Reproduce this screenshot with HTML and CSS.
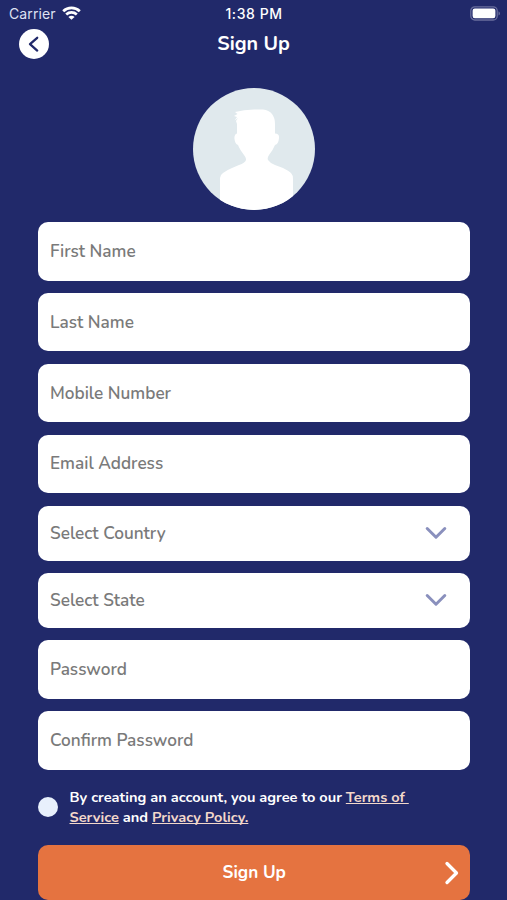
FILE: index.html
```html
<!DOCTYPE html>
<html lang="en">
<head>
<meta charset="utf-8">
<title>Sign Up</title>
<link rel="stylesheet" href="styles.css">
</head>
<body>
<main class="screen">
  <div class="status">
    <div class="carrier"><span>Carrier</span>
      <svg width="19" height="14" viewBox="0 0 19 14" fill="none" stroke="#fff" stroke-width="2.7"><path d="M1.200 5.200C5.800.7 13.200.7 17.800 5.200M4.200 8.400c3-2.800 7.600-2.800 10.600 0"/><path d="M9.500 13.700 6.400 10.900c1.700-1.500 4.500-1.500 6.200 0z" fill="#fff" stroke="none"/></svg>
    </div>
    <time class="time">1:38 PM</time>
    <svg class="battery" width="31" height="15" viewBox="0 0 31 15"><rect x=".8" y=".8" width="26.400" height="13.200" rx="4" fill="none" stroke="#696e9d" stroke-width="1.300"/><rect x="2.600" y="2.600" width="22.800" height="9.600" rx="2.200" fill="#fff"/><path d="M28.500 5.200c2 .9 2 3.500 0 4.400z" fill="#696e9d"/></svg>
  </div>
  <header class="header">
    <button class="back" aria-label="Back"><svg width="30" height="30" viewBox="0 0 30 30" fill="none" stroke="#21296a" stroke-width="2.300" stroke-linecap="round" stroke-linejoin="round"><path d="M18.200 8.800l-7.200 6.400 7.200 6.400"/></svg></button>
    <h1 class="title">Sign Up</h1>
  </header>
  <svg class="avatar" width="122" height="122" viewBox="0 0 122 122">
    <defs><clipPath id="round"><circle cx="61" cy="61" r="61"/></clipPath></defs>
    <g clip-path="url(#round)"><path fill="#e0e9ed" d="M0 0h122v122H0z"/><path fill="#fff" d="M27 122V90Q27 87 30 85Q34 82 39 80L46 77Q52 75 53 72Q53.500 70 51 67Q46.500 61 45 57Q42 56 41.500 51Q41 46.500 44 45.500V36L43 33L45 30L41.500 32.500L44 29L41 28L44.500 26L42 24Q51 21.500 61 21.500H70Q76 22 79 26Q82 30 82 36V45.500Q86.500 45.500 86 50Q85.500 56 82 57Q80 62 76 67Q74 70 75 72Q77 75 82 77L90 80Q96 83 98 85Q100 87 100 91V122z"/></g>
  </svg>
  <form class="form">
    <div class="field"><span>First Name</span></div>
    <div class="field"><span>Last Name</span></div>
    <div class="field"><span>Mobile Number</span></div>
    <div class="field"><span>Email Address</span></div>
    <div class="field select"><span>Select Country</span><svg class="down" width="22" height="14" viewBox="0 0 22 14"><path d="M2.200 2.500 11 11.200 19.800 2.500"/></svg></div>
    <div class="field select"><span>Select State</span><svg class="down" width="22" height="14" viewBox="0 0 22 14"><path d="M2.200 2.500 11 11.200 19.800 2.500"/></svg></div>
    <div class="field"><span>Password</span></div>
    <div class="field"><span>Confirm Password</span></div>
    <div class="agree"><i class="radio"></i><p class="terms">By creating an account, you agree to our <a>Terms of&nbsp;</a><br><a>Service</a> and <a>Privacy Policy.</a></p></div>
    <button type="button" class="submit"><span class="submit-label">Sign Up</span><svg class="next" width="16" height="24" viewBox="0 0 16 24"><path d="M4 2.500l9.500 9.500L4 21.500"/></svg></button>
  </form>
</main>
</body>
</html>
```
FILE: styles.css
```css
* { box-sizing: border-box; }
body { margin: 0; background: #21296a; color: #fff; font-family: Nunito, Lato, "Open Sans", sans-serif; }
button { border: 0; padding: 0; font: inherit; color: inherit; }
.screen { width: 507px; height: 900px; overflow: hidden; }
.status { display: grid; grid-template-columns: 1fr auto 1fr; align-items: center; height: 28px; padding: 0 6px 0 9px; font: 14px/28px Inter, sans-serif; }
.carrier { display: flex; align-items: center; gap: 6px; color: #dfe1f2; letter-spacing: .1px; }
.carrier svg { margin-top: -2px; }
.time { margin-left: -2px; font-weight: 500; letter-spacing: .55px; }
.battery { justify-self: end; margin-top: -2px; }
.header { display: grid; grid-template-columns: 30px 1fr 30px; align-items: center; height: 32px; padding: 0 19px; }
.back { width: 30px; height: 30px; border-radius: 50%; background: #fff; }
.back svg { display: block; }
.title { margin: 0; text-align: center; font-size: 19.700px; font-weight: 700; line-height: 30px; }
.avatar { display: block; margin: 28px auto 12px 193px; }
.form { display: flex; flex-direction: column; gap: 12.300px; width: 432.500px; margin-left: 37.500px; }
.field { display: flex; align-items: center; justify-content: space-between; flex: none; height: 58.600px; padding: 0 23.500px 0 12.500px; border-radius: 10px; background: #fff; color: #7a7a7a; font-size: 17.200px; font-weight: 600; }
.select { height: 55px; }
.down { fill: none; stroke: #8a90bd; stroke-width: 3; stroke-linecap: round; stroke-linejoin: round; }
.agree { display: flex; align-items: center; gap: 12px; height: 51px; }
.radio { flex: none; width: 20px; height: 20px; border-radius: 50%; background: #e8f0fc; }
.terms { margin: 0; white-space: nowrap; font-size: 14.580px; font-weight: 700; line-height: 20px; }
.terms a { color: #f3d8ca; text-decoration: underline; text-decoration-skip-ink: none; }
.submit { display: grid; grid-template-columns: 24px 1fr 24px; align-items: center; height: 55px; padding: 0 7px 0 8px; border-radius: 10px; background: #e57340; font-size: 17.200px; font-weight: 700; }
.submit-label { grid-column: 2; }
.next { fill: none; stroke: #fff; stroke-width: 3.300; stroke-linecap: round; stroke-linejoin: round; justify-self: center; }
```
